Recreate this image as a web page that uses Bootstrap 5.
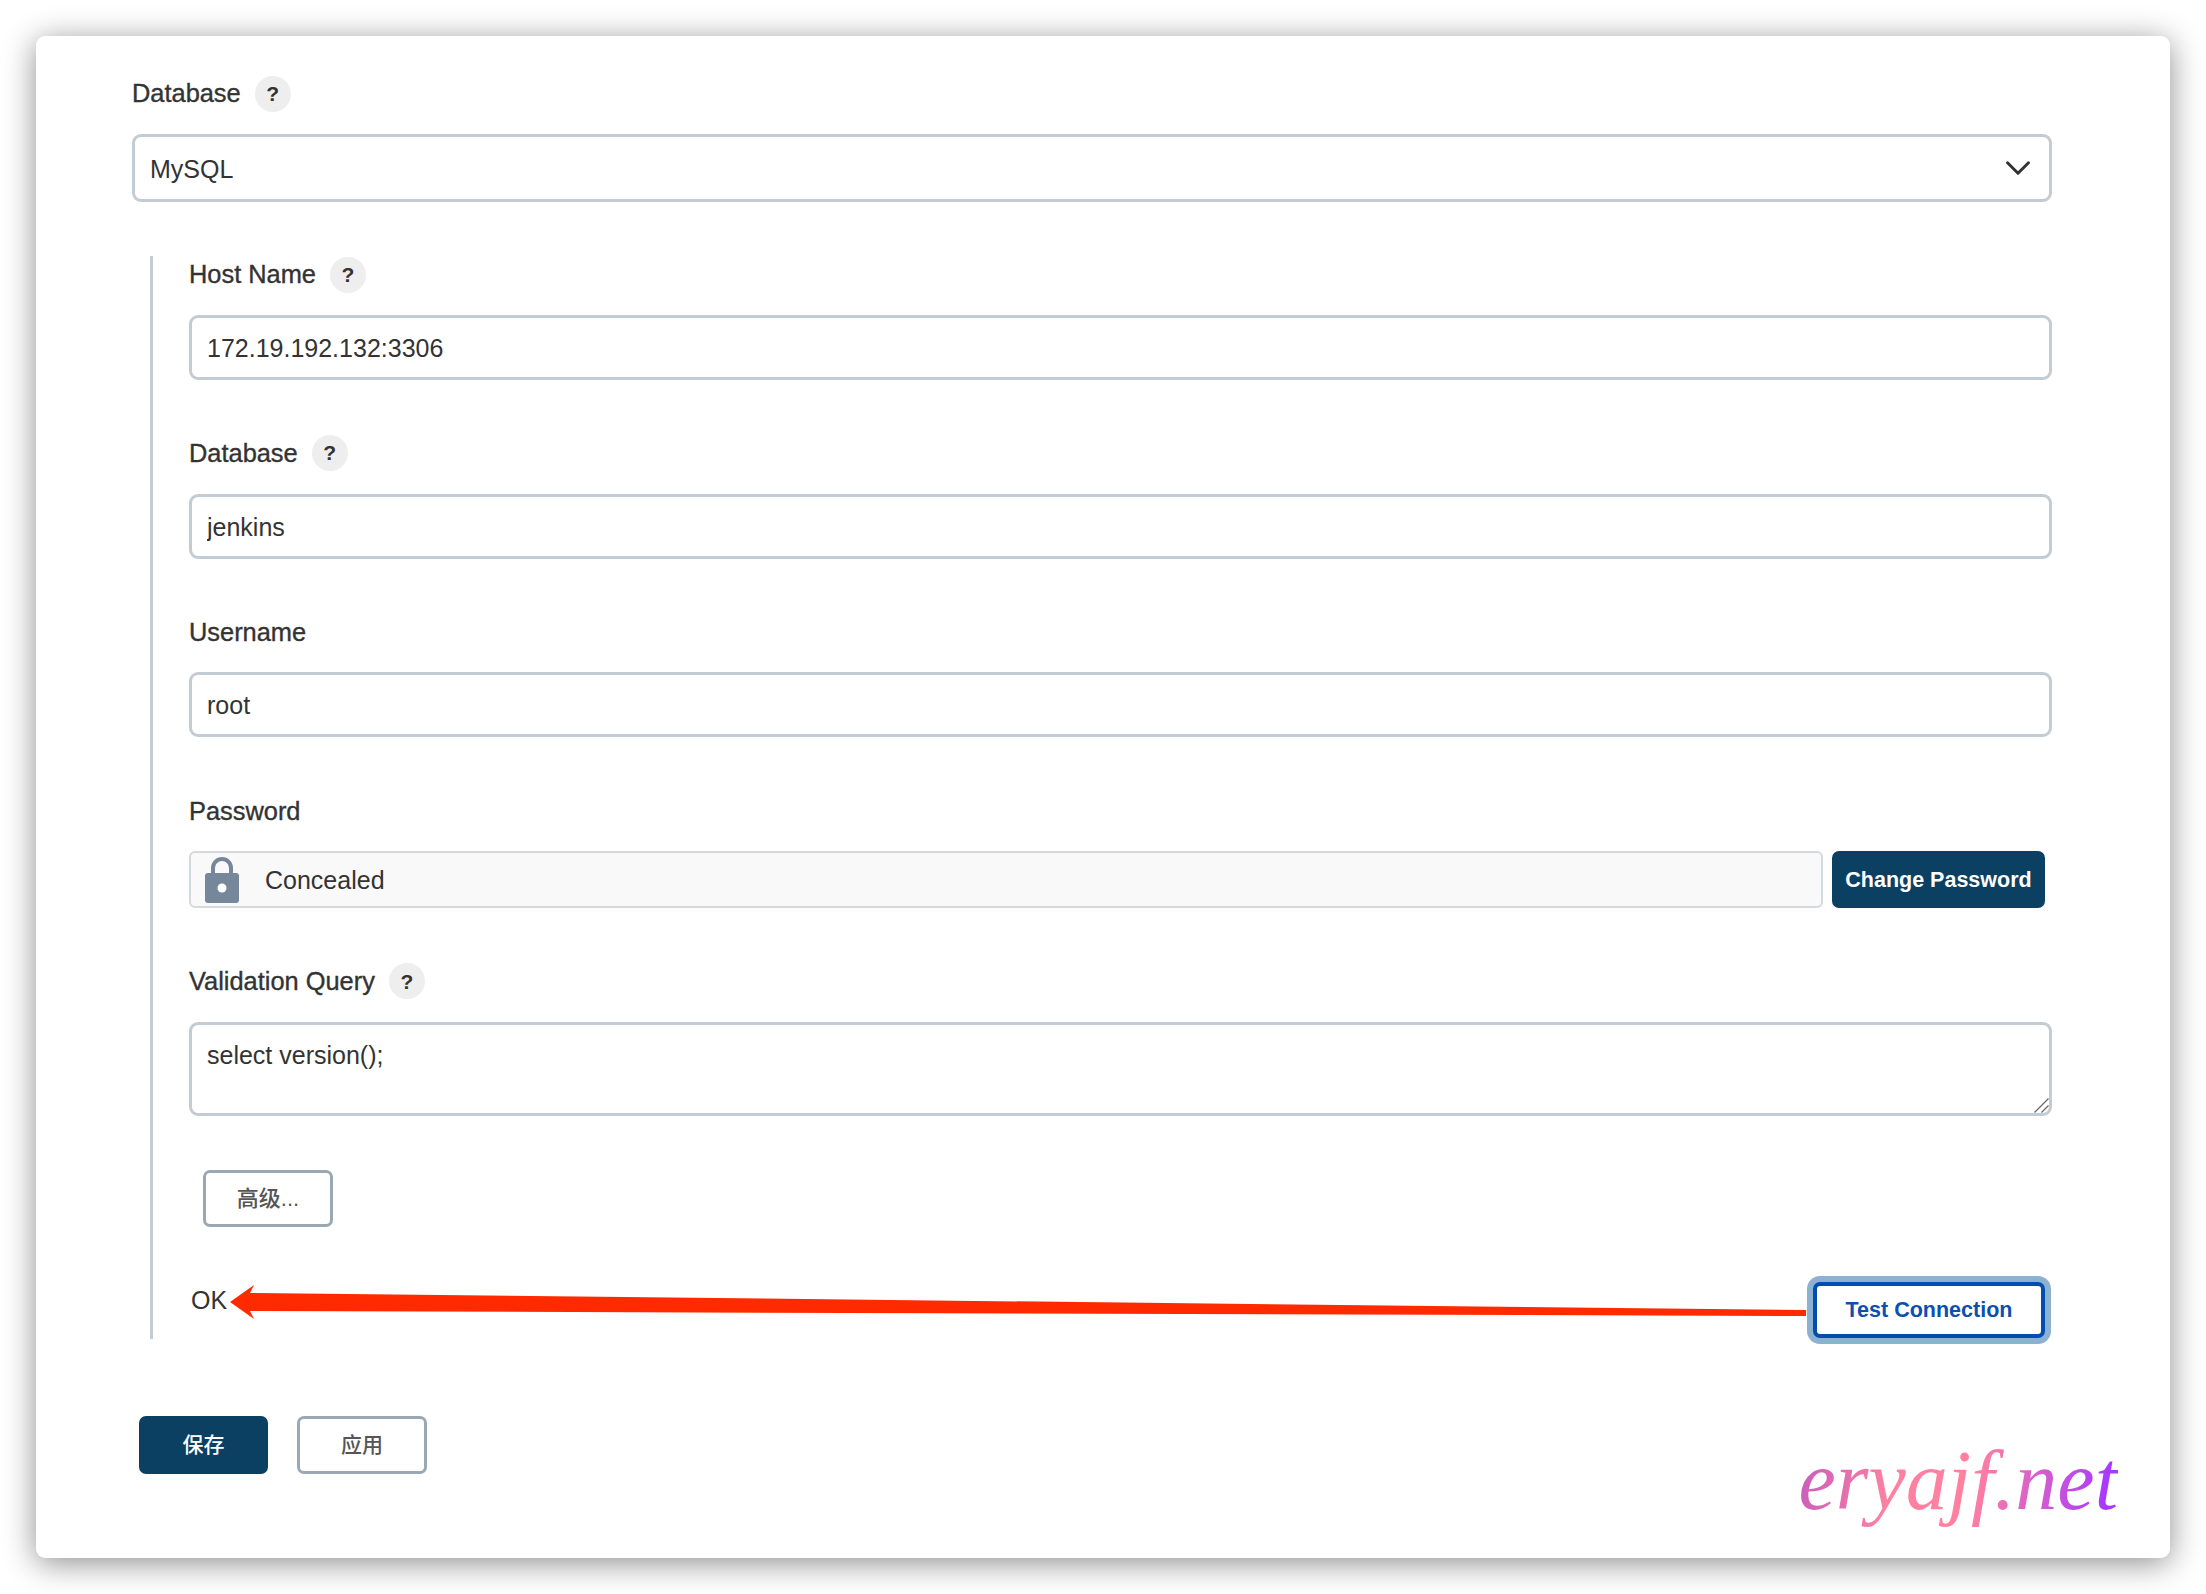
<!DOCTYPE html>
<html lang="en">
<head>
  <meta charset="UTF-8">
  <title>Database</title>
  <link rel="stylesheet" href="https://cdn.jsdelivr.net/npm/bootstrap@5.3.0/dist/css/bootstrap.min.css">
  <script src="https://cdn.jsdelivr.net/npm/bootstrap@5.3.0/dist/js/bootstrap.bundle.min.js"></script>
  <style>
    body {
      padding: 36px;
      background: #fff;
      color: #333;
      font-family: "Liberation Sans", "Noto Sans CJK SC", sans-serif;
      font-size: 25px;
    }

    .app-window {
      height: 1522px;
      padding: 39px 118px 0 96px;
      background: #fff;
      border-radius: 9px;
      box-shadow: 0 5px 32px rgba(0, 0, 0, .45);
    }

    .field-label {
      height: 36px;
      margin-bottom: 23px;
      padding-top: 1px;
      font-size: 25.4px;
      font-weight: 400;
      -webkit-text-stroke: .35px #333;
    }

    .help-dot {
      width: 36px;
      height: 36px;
      margin-left: 14px;
      border-radius: 50%;
      background: #eee;
      font-size: 21px;
      font-weight: 700;
      -webkit-text-stroke: 0;
    }

    .form-control.plain-input,
    .form-select.plain-select {
      height: 65px;
      padding: 2px 15px 0;
      border: 3px solid #c3ccd3;
      border-radius: 9px;
      color: #333;
      font-size: 25px;
    }

    .form-select.plain-select {
      height: 68px;
      padding: 3px 15px 0;
      background-image: url("data:image/svg+xml,%3csvg xmlns='http://www.w3.org/2000/svg' viewBox='0 0 16 16'%3e%3cpath fill='none' stroke='%23333' stroke-linecap='round' stroke-linejoin='round' stroke-width='1.7' d='m2 5 6 6 6-6'/%3e%3c/svg%3e");
      background-size: 28px 28px;
      background-position: right 17px center;
    }

    .form-control.plain-input.query-box {
      height: 94px;
      padding: 12px 15px;
    }

    .query-box::-webkit-resizer {
      background: url("data:image/svg+xml,%3csvg xmlns='http://www.w3.org/2000/svg' viewBox='0 0 16 16'%3e%3cpath fill='none' stroke='%23666' stroke-width='1.2' d='M1 15 15 1M8 15l7-7'/%3e%3c/svg%3e") no-repeat center / 16px 16px;
    }

    .nested-block {
      margin: 54px 0 0 18px;
      padding: 0 0 1px 36px;
      border-left: 3px solid #c3ccd3;
    }

    .field-row {
      margin-bottom: 54.7px;
    }

    .secret-box {
      height: 57px;
      padding: 1px 0 0 13px;
      background: #f9f9f9;
      border: 2px solid #d3dade;
      border-radius: 6px;
    }

    .secret-box span {
      margin: 2px 0 0 25px;
    }

    .btn.dark-btn {
      background: #0b4062;
      border: 0;
      border-radius: 7px;
      color: #fff;
    }

    .btn.change-btn {
      width: 213px;
      height: 57px;
      margin: 0 7px 0 9px;
      padding: 1px 0 0;
      font-size: 21.5px;
      font-weight: 700;
    }

    .btn.outline-btn {
      width: 130px;
      height: 58px;
      padding: 0;
      background: #fff;
      border: 3px solid #9aa8b3;
      border-radius: 7px;
      color: #555;
      font-size: 21px;
      font-weight: 500;
    }

    .btn.dark-btn.save-btn {
      width: 129px;
      height: 58px;
      padding: 0;
      font-size: 21px;
      font-weight: 500;
    }

    .btn.outline-btn.advanced-btn {
      height: 57px;
      margin: 54px 0 0 14px;
      font-size: 22px;
    }

    .test-row {
      margin-top: 55px;
    }

    .ok-text {
      margin-left: 2px;
      line-height: 36px;
    }

    .btn.test-btn {
      width: 232px;
      height: 56px;
      margin-right: 7px;
      padding: 0;
      background: #fff;
      border: 4px solid #034db0;
      border-radius: 7px;
      box-shadow: 0 0 0 6px #8cb1d1;
      color: #0b4fb0;
      font-size: 21.5px;
      font-weight: 700;
    }

    .red-arrow {
      left: 0;
      top: -1px;
      pointer-events: none;
    }

    .bottom-bar {
      margin: 77px 0 0 7px;
      gap: 29px;
    }

    .watermark {
      right: 52px;
      bottom: 26px;
      font-family: "Liberation Serif", serif;
      font-size: 84px;
      font-style: italic;
      line-height: 1.2;
      background: linear-gradient(100deg, #c45ac0 0%, #ff80a0 30%, #ff80a0 55%, #a838ff 95%);
      -webkit-background-clip: text;
      background-clip: text;
      color: transparent;
    }
  </style>
</head>
<body>
  <div class="app-window position-relative">
    <div class="field-label d-flex align-items-center">Database <span class="help-dot d-flex align-items-center justify-content-center">?</span></div>
    <select class="form-select plain-select">
      <option>MySQL</option>
    </select>

    <div class="nested-block">
      <div class="field-row">
        <div class="field-label d-flex align-items-center">Host Name <span class="help-dot d-flex align-items-center justify-content-center">?</span></div>
        <input type="text" class="form-control plain-input" value="172.19.192.132:3306">
      </div>
      <div class="field-row">
        <div class="field-label d-flex align-items-center">Database <span class="help-dot d-flex align-items-center justify-content-center">?</span></div>
        <input type="text" class="form-control plain-input" value="jenkins">
      </div>
      <div class="field-row">
        <div class="field-label d-flex align-items-center">Username</div>
        <input type="text" class="form-control plain-input" value="root">
      </div>
      <div class="field-row">
        <div class="field-label d-flex align-items-center">Password</div>
        <div class="d-flex">
          <div class="secret-box flex-grow-1 d-flex align-items-center">
            <svg width="36" height="46" viewBox="0 0 36 46">
              <path d="M9 17V11a9 9 0 0 1 18 0v6" fill="none" stroke="#77879b" stroke-width="4"/>
              <rect x="1" y="16" width="34" height="30" rx="3" fill="#77879b"/>
              <circle cx="18" cy="31" r="4.5" fill="#fff"/>
            </svg>
            <span>Concealed</span>
          </div>
          <button class="btn dark-btn change-btn">Change Password</button>
        </div>
      </div>
      <div>
        <div class="field-label d-flex align-items-center">Validation Query <span class="help-dot d-flex align-items-center justify-content-center">?</span></div>
        <textarea class="form-control plain-input query-box">select version();</textarea>
      </div>
      <button class="btn outline-btn advanced-btn d-block">高级...</button>
      <div class="test-row position-relative d-flex justify-content-between align-items-start">
        <span class="ok-text">OK</span>
        <button class="btn test-btn">Test Connection</button>
        <svg class="red-arrow position-absolute" width="1620" height="60" viewBox="0 0 1620 60">
          <polygon points="41,21 65,4 61,12 1617,29 1617,35 61,30 65,38" fill="#ff2a00"/>
        </svg>
      </div>
    </div>

    <div class="bottom-bar d-flex">
      <button class="btn dark-btn save-btn">保存</button>
      <button class="btn outline-btn">应用</button>
    </div>

    <div class="watermark position-absolute">eryajf.net</div>
  </div>
</body>
</html>
